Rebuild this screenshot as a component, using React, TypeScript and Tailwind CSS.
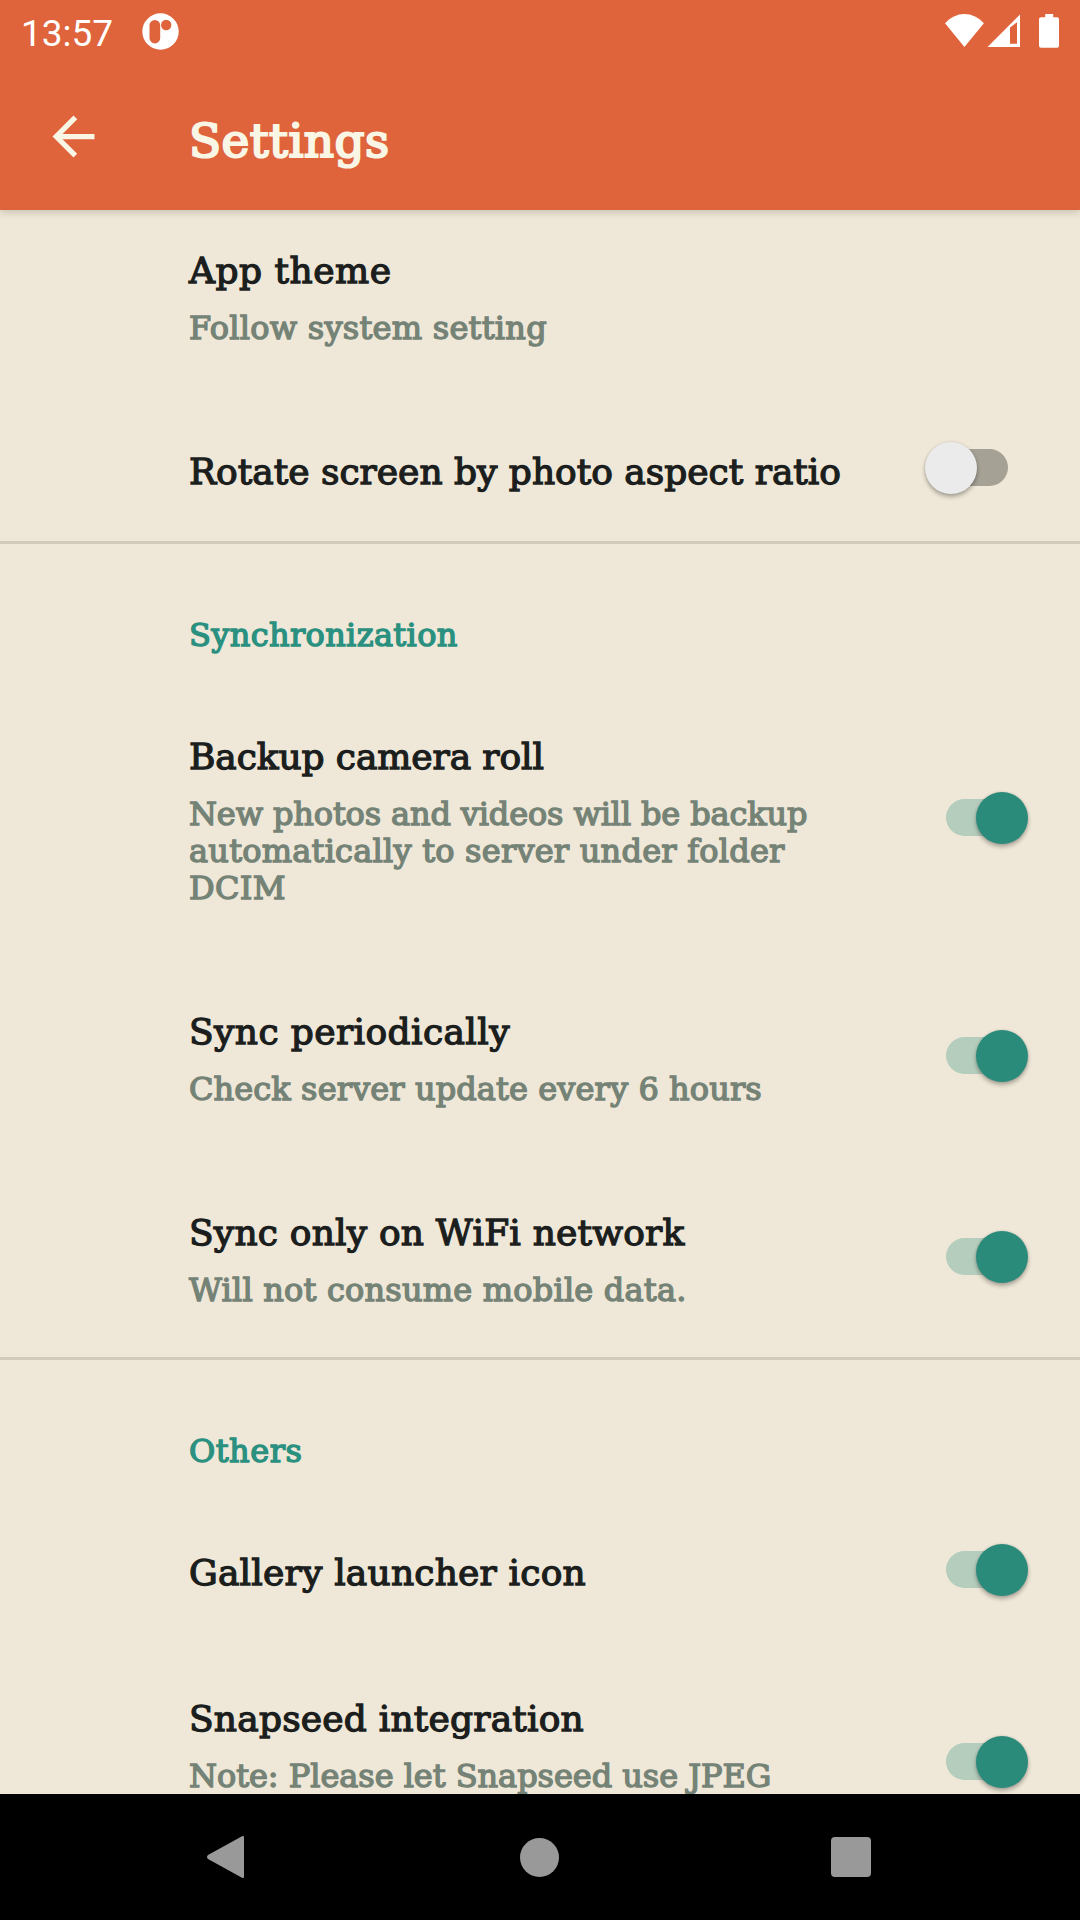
import type { ReactNode } from "react";

const titleClass =
  "text-[36px] leading-[48px] whitespace-nowrap text-[#1b1e1d] [-webkit-text-stroke:1.3px_#1b1e1d]";
const summaryClass =
  "mt-[15px] text-[32px] leading-[37px] whitespace-nowrap text-[#758377] [-webkit-text-stroke:1.4px_#758377]";

function Toggle({ on }: { on: boolean }) {
  return (
    <div
      role="switch"
      aria-checked={on}
      className="relative flex h-[52px] w-[103px] shrink-0 items-center justify-center"
    >
      <div className={`h-[37px] w-[62px] rounded-full ${on ? "bg-[#b5cdbc]" : "bg-[#a5a195]"}`} />
      <div
        className={`absolute top-0 size-[52px] rounded-full shadow-[0_3px_4px_rgba(0,0,0,0.28),0_0_3px_rgba(0,0,0,0.12)] ${
          on ? "right-0 bg-[#2a8b7b]" : "left-0 bg-[#ebebeb]"
        }`}
      />
    </div>
  );
}

function Row({
  className,
  textClass,
  title,
  children,
  on,
}: {
  className: string;
  textClass: string;
  title: ReactNode;
  children?: ReactNode;
  on?: boolean;
}) {
  return (
    <div className={`flex shrink-0 items-center justify-between pr-[52px] pl-[189px] ${className}`}>
      <div className={`self-start ${textClass}`}>
        <div className={titleClass}>{title}</div>
        {children && <div className={summaryClass}>{children}</div>}
      </div>
      {on !== undefined && <Toggle on={on} />}
    </div>
  );
}

function SectionHeader({ children }: { children: ReactNode }) {
  return (
    <div className="h-[136px] shrink-0 pt-[73px] pl-[189px] text-[32px] leading-[37px] text-[#2a9080] [-webkit-text-stroke:1.4px_#2a9080]">
      {children}
    </div>
  );
}

function Divider() {
  return <div className="h-[3px] shrink-0 bg-[#d3cbba]" />;
}

function StatusBar() {
  return (
    <div className="flex h-[63px] justify-between pr-[21px] pl-[21px] text-white">
      <div className="flex">
        <span className="pt-[12px] font-[Roboto] text-[37px] leading-[44px]">13:57</span>
        <svg className="mt-[13px] ml-[29px]" width="37" height="37" viewBox="0 0 37 37">
          <circle cx="18.5" cy="18.5" r="18.2" fill="#fff" />
          <rect x="7.5" y="7" width="10.7" height="23.4" rx="5.3" fill="#df633b" />
          <circle cx="24.2" cy="12" r="5.2" fill="#df633b" />
        </svg>
      </div>
      <svg className="mt-[13px]" width="115" height="36" viewBox="944 13 115 36" fill="#fff">
        <path d="M945 23.2C950.5 17.4 957 14 964.4 14s14 3.400 19.500 9.200L964.400 47z" />
        <path
          fillRule="evenodd"
          d="M987.500 47L1020 14.500V47zM1010 27.500V43.800h7V22.200z"
        />
        <path d="M1045.200 14h8v3.300h3.800a2 2 0 0 1 2 2v26.500a2 2 0 0 1-2 2h-16a2 2 0 0 1-2-2V19.300a2 2 0 0 1 2-2h4.200z" />
      </svg>
    </div>
  );
}

export default function App() {
  return (
    <div className="flex h-[1920px] w-[1080px] flex-col overflow-hidden bg-[#efe8d8] font-['DejaVu_Serif',serif]">
      <header className="z-10 h-[210px] shrink-0 bg-[#df633b] shadow-[0_2px_8px_rgba(0,0,0,0.18)]">
        <StatusBar />
        <div className="flex h-[147px] items-center pl-[42px] text-[#faf6e6]">
          <svg className="mb-[1px]" width="63" height="63" viewBox="0 0 24 24" fill="currentColor">
            <path d="M20 11H7.830l5.590-5.590L12 4l-8 8 8 8 1.410-1.410L7.830 13H20v-2z" />
          </svg>
          <h1 className="mt-[8px] ml-[84px] text-[47px] leading-[60px] tracking-[0.4px] [-webkit-text-stroke:2.2px_#faf6e6]">
            Settings
          </h1>
        </div>
      </header>

      <main className="flex h-[1584px] shrink-0 flex-col overflow-hidden">
        <Row
          className="h-[184px]"
          textClass="pt-[37px]"
          title={<span className="tracking-[0.5px]">App theme</span>}
        >
          <span className="tracking-[0.25px]">Follow system setting</span>
        </Row>
        <Row
          className="h-[147px]"
          textClass="pt-[54px]"
          title={<span className="tracking-[0px]">Rotate screen by photo aspect ratio</span>}
          on={false}
        />
        <Divider />
        <SectionHeader>
          <span className="tracking-[0.35px]">Synchronization</span>
        </SectionHeader>
        <Row
          className="h-[275px]"
          textClass="pt-[53px]"
          title={<span className="tracking-[-0.1px]">Backup camera roll</span>}
          on
        >
          <span className="tracking-[-0.14px]">New photos and videos will be backup</span>
          <br />
          <span className="tracking-[0.22px]">automatically to server under folder</span>
          <br />
          <span className="tracking-[0.3px]">DCIM</span>
        </Row>
        <Row
          className="h-[201px]"
          textClass="pt-[53px]"
          title={<span className="tracking-[0.4px]">Sync periodically</span>}
          on
        >
          <span className="tracking-[0.1px]">Check server update every 6 hours</span>
        </Row>
        <Row
          className="h-[201px]"
          textClass="pt-[53px]"
          title={<span className="tracking-[0.2px]">Sync only on WiFi network</span>}
          on
        >
          <span className="tracking-[0.2px]">Will not consume mobile data.</span>
        </Row>
        <Divider />
        <SectionHeader>
          <span className="tracking-[0.5px]">Others</span>
        </SectionHeader>
        <Row
          className="h-[147px]"
          textClass="pt-[53px]"
          title={<span className="tracking-[0.2px]">Gallery launcher icon</span>}
          on
        />
        <Row
          className="h-[237px]"
          textClass="pt-[52px]"
          title={<span className="tracking-[0.2px]">Snapseed integration</span>}
          on
        >
          <span className="tracking-[-0.05px]">Note: Please let Snapseed use JPEG</span>
        </Row>
      </main>

      <nav className="flex h-[126px] shrink-0 items-center justify-between bg-black pr-[209px] pl-[206px]">
        <svg width="39" height="44" viewBox="0 0 39 44" fill="#999">
          <path d="M36 1.200c1-.7 2-.2 2 1v39.600c0 1.200-1 1.700-2 1L2 24q-2-2 0-4z" />
        </svg>
        <div className="ml-[3px] size-[39px] rounded-full bg-[#999]" />
        <div className="size-[40px] rounded-[4px] bg-[#999]" />
      </nav>
    </div>
  );
}
